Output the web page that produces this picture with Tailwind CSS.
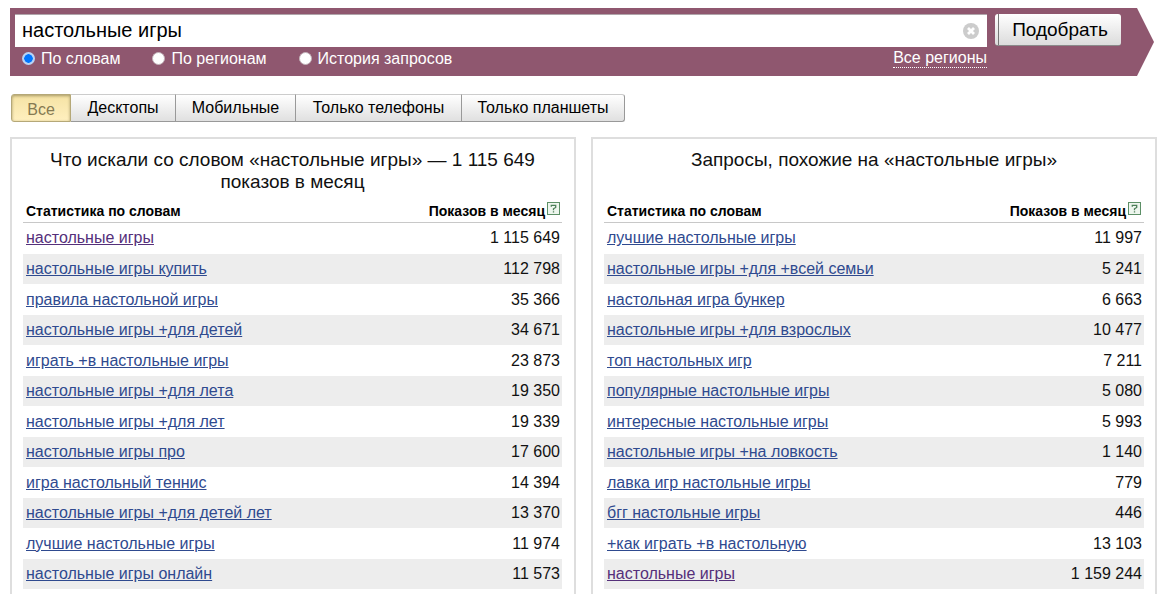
<!DOCTYPE html>
<html lang="ru">
<head>
<meta charset="utf-8">
<meta name="viewport" content="width=device-width, initial-scale=1">
<title>Подбор слов</title>
<script src="https://cdn.jsdelivr.net/npm/@tailwindcss/browser@4"></script>
</head>
<body class="flex min-h-screen flex-col bg-white pl-[10px] pr-[10px] pt-2 font-['Liberation_Sans',Arial,sans-serif] text-base text-[#111]">

<form class="mr-[3px] flex h-[68px] items-start gap-2 bg-[#8f576f] pl-[5px] pr-[33px] pt-[6px] text-white [clip-path:polygon(0_0,calc(100%-17px)_0,100%_50%,calc(100%-17px)_100%,0_100%)]">
  <div class="min-w-0 flex-1">
    <div class="flex h-[33px] items-center border-t border-[#b0a5aa] bg-white pl-[7px] pr-2">
      <input type="text" value="настольные игры" aria-label="Запрос" class="h-full min-w-0 flex-1 pb-[2px] text-[20px] text-black outline-none">
      <button type="button" aria-label="Очистить">
        <svg class="block size-4" viewBox="0 0 16 16"><circle cx="8" cy="8" r="8" fill="#ccc"/><path d="M5 5l6 6M11 5l-6 6" stroke="#fff" stroke-width="2.8"/></svg>
      </button>
    </div>
    <div class="flex h-[23px] items-center">
      <label class="ml-[7px] flex items-center gap-[6px]"><input type="radio" name="mode" checked class="size-[13px] appearance-none rounded-full border-2 border-[#b9d3f5] bg-white checked:bg-[radial-gradient(circle,#0075ff_4px,#fff_5px)]"><span>По словам</span></label>
      <label class="ml-8 flex items-center gap-[6px]"><input type="radio" name="mode" class="size-[13px] appearance-none rounded-full border border-[#c4b4bb] bg-white"><span>По регионам</span></label>
      <label class="ml-8 flex items-center gap-[6px]"><input type="radio" name="mode" class="size-[13px] appearance-none rounded-full border border-[#c4b4bb] bg-white"><span>История запросов</span></label>
      <a href="#" class="ml-auto border-b border-dotted border-white leading-[18px]">Все регионы</a>
    </div>
  </div>
  <button type="submit" class="flex h-8 w-[126px] rounded-[3px] border-b border-[#8a8a8a] bg-linear-to-b from-white to-[#dcdcdc] pl-[3px] text-[19px] leading-[31px] text-black"><span class="h-full flex-1 border-l border-[#777]">Подобрать</span></button>
</form>

<nav class="ml-px mt-[18px] flex h-7 text-base leading-[24px] text-black">
  <button type="button" class="w-[60px] rounded-l-[3px] border border-[#b5a878] bg-linear-to-b from-[#f5e3a4] to-[#fff0bf] pt-[3px] text-[#857a52] shadow-[inset_0_1px_3px_#a89a68]">Все</button>
  <button type="button" class="w-[105px] border-y border-r border-t-[#ccc] border-r-[#999] border-b-[#999] bg-linear-to-b from-white to-[#e0e0e0]">Десктопы</button>
  <button type="button" class="w-[120px] border-y border-r border-t-[#ccc] border-r-[#999] border-b-[#999] bg-linear-to-b from-white to-[#e0e0e0]">Мобильные</button>
  <button type="button" class="w-[166px] border-y border-r border-t-[#ccc] border-r-[#999] border-b-[#999] bg-linear-to-b from-white to-[#e0e0e0]">Только телефоны</button>
  <button type="button" class="w-[163px] rounded-r-[3px] border-y border-r border-t-[#ccc] border-r-[#999] border-b-[#999] bg-linear-to-b from-white to-[#e0e0e0]">Только планшеты</button>
</nav>

<main class="mt-[15px] grid flex-1 grid-cols-2 gap-[15px]">
  <section class="border-2 border-b-0 border-[#dedede] pl-[11px] pr-3 pt-[10px]">
    <h2 class="h-[51px] px-2 text-center text-[19px] leading-[22px]">Что искали со словом «настольные игры» — 1 115 649<br>показов в месяц</h2>
    <table class="w-full">
      <thead><tr class="h-[22px] border-b border-[#c8c8c8] text-sm leading-5 text-black">
        <th class="pl-[3px] text-left">Статистика по словам</th>
        <th class="pr-[2px]"><div class="flex items-center justify-end gap-[2px]">Показов в месяц<svg class="mb-1 size-[13px]" viewBox="0 0 13 13"><rect x=".5" y=".5" width="12" height="12" fill="#eef6ee" stroke="#5c8f66"/><path d="M4.3 4.8V3.3h4.4v2.2L6.5 6.8v1.4M6.5 9.2v1.3" fill="none" stroke="#4c7f58" stroke-width="1.3"/></svg></div></th>
      </tr></thead>
      <tbody id="words"></tbody>
    </table>
  </section>
  <section class="border-2 border-b-0 border-[#dedede] pl-[11px] pr-[11px] pt-[10px]">
    <h2 class="h-[51px] px-2 text-center text-[19px] leading-[22px]">Запросы, похожие на «настольные игры»</h2>
    <table class="w-full">
      <thead><tr class="h-[22px] border-b border-[#c8c8c8] text-sm leading-5 text-black">
        <th class="pl-[3px] text-left">Статистика по словам</th>
        <th class="pr-[3px]"><div class="flex items-center justify-end gap-[2px]">Показов в месяц<svg class="mb-1 size-[13px]" viewBox="0 0 13 13"><rect x=".5" y=".5" width="12" height="12" fill="#eef6ee" stroke="#5c8f66"/><path d="M4.3 4.8V3.3h4.4v2.2L6.5 6.8v1.4M6.5 9.2v1.3" fill="none" stroke="#4c7f58" stroke-width="1.3"/></svg></div></th>
      </tr></thead>
      <tbody id="similar"></tbody>
    </table>
  </section>
</main>

<script>
const words = [
  ['настольные игры', '1 115 649'], ['настольные игры купить', '112 798'],
  ['правила настольной игры', '35 366'], ['настольные игры +для детей', '34 671'],
  ['играть +в настольные игры', '23 873'], ['настольные игры +для лета', '19 350'],
  ['настольные игры +для лет', '19 339'], ['настольные игры про', '17 600'],
  ['игра настольный теннис', '14 394'], ['настольные игры +для детей лет', '13 370'],
  ['лучшие настольные игры', '11 974'], ['настольные игры онлайн', '11 573']
];
const similar = [
  ['лучшие настольные игры', '11 997'], ['настольные игры +для +всей семьи', '5 241'],
  ['настольная игра бункер', '6 663'], ['настольные игры +для взрослых', '10 477'],
  ['топ настольных игр', '7 211'], ['популярные настольные игры', '5 080'],
  ['интересные настольные игры', '5 993'], ['настольные игры +на ловкость', '1 140'],
  ['лавка игр настольные игры', '779'], ['бгг настольные игры', '446'],
  ['+как играть +в настольную', '13 103'], ['настольные игры', '1 159 244']
];
function fill(id, rows) {
  document.getElementById(id).innerHTML = rows.map(([text, count]) => {
    const color = text === 'настольные игры' ? 'text-[#55307a]' : 'text-[#2f4a8f]';
    return `<tr class="h-[31px] first:h-8 even:h-[30px] even:bg-[#ededed]"><td class="pl-[3px] leading-5"><a href="#" class="underline ${color}">${text}</a></td><td class="pr-[2px] text-right leading-5">${count}</td></tr>`;
  }).join('');
}
fill('words', words);
fill('similar', similar);
</script>
</body>
</html>
